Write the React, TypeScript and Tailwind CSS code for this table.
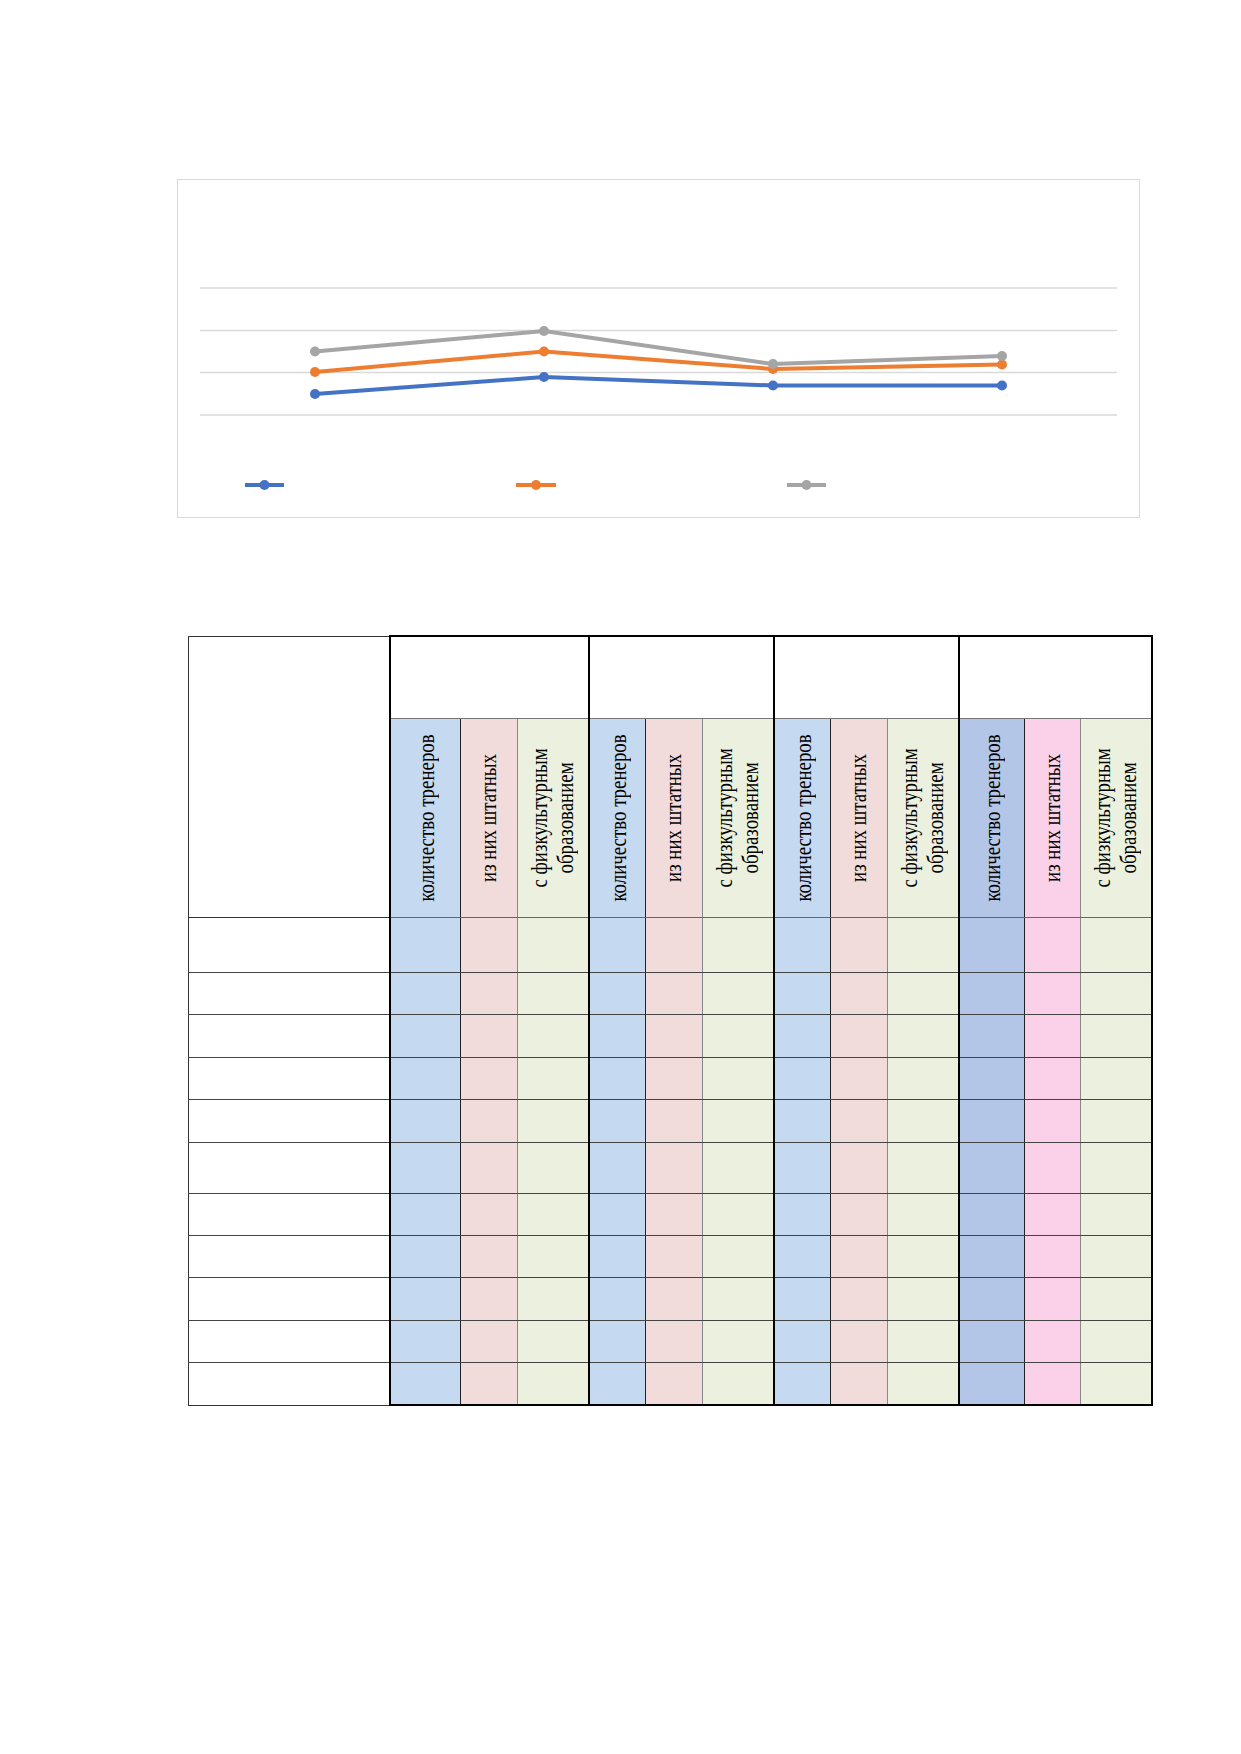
import React from 'react';

const serif = { fontFamily: '"Liberation Serif", "Times New Roman", serif' };

// chart series, already in svg pixel space (origin = inner top-left of the chart box)
const xs = [137, 366, 595, 824];
const series = [
  { color: '#4472c4', ys: [214, 197, 205.5, 205.5], legend: [67, 106] },
  { color: '#ed7d31', ys: [192, 171.5, 189, 184.5], legend: [338, 378] },
  { color: '#a5a5a5', ys: [171.5, 151, 184, 176], legend: [609, 648] },
];
const gridYs = [108, 150.5, 192.5, 235];

const Chart: React.FC = () => (
  <div className="ml-[177px] w-[963px] h-[339px] border border-[#d9d9d9] bg-white">
    <svg width="961" height="337" viewBox="0 0 961 337">
      {gridYs.map((y) => (
        <line key={y} x1="22" x2="939" y1={y} y2={y} stroke="#d9d9d9" strokeWidth="1.5" />
      ))}
      {series.map((s) => (
        <g key={s.color}>
          <polyline
            points={xs.map((x, i) => `${x},${s.ys[i]}`).join(' ')}
            fill="none"
            stroke={s.color}
            strokeWidth="4"
            strokeLinejoin="round"
            strokeLinecap="round"
          />
          {xs.map((x, i) => (
            <circle key={x} cx={x} cy={s.ys[i]} r="5" fill={s.color} />
          ))}
          <line x1={s.legend[0]} x2={s.legend[1]} y1="305" y2="305" stroke={s.color} strokeWidth="4" />
          <circle cx={(s.legend[0] + s.legend[1]) / 2} cy="305" r="5" fill={s.color} />
        </g>
      ))}
    </svg>
  </div>
);

type Group = { widths: number[]; blue: string; pink: string; green: string };

const groups: Group[] = [
  { widths: [71, 57, 71], blue: 'bg-[#c5d9f1]', pink: 'bg-[#f2dcdb]', green: 'bg-[#ebf1de]' },
  { widths: [57, 57, 71], blue: 'bg-[#c5d9f1]', pink: 'bg-[#f2dcdb]', green: 'bg-[#ebf1de]' },
  { widths: [57, 57, 71], blue: 'bg-[#c5d9f1]', pink: 'bg-[#f2dcdb]', green: 'bg-[#ebf1de]' },
  { widths: [66, 56, 71], blue: 'bg-[#b4c6e7]', pink: 'bg-[#fbd0e9]', green: 'bg-[#ebf1de]' },
];

const rowHeights = [55, 42, 43, 42, 43, 51, 42, 42, 43, 42, 43];

// header text runs bottom to top, slightly condensed like the scanned original
const VText: React.FC<{ children: React.ReactNode }> = ({ children }) => (
  <div className="flex h-[196px] items-center justify-center overflow-visible">
    <div className="shrink-0 [writing-mode:vertical-rl] rotate-180 scale-y-[0.82] text-center text-[23px] leading-[26px] text-black whitespace-nowrap">
      {children}
    </div>
  </div>
);

const DataTable: React.FC = () => (
  <table className="ml-[188px] mt-[117px] w-[963px] table-fixed border-collapse" style={serif}>
    <colgroup>
      <col className="w-[201px]" />
      {groups.map((g, gi) =>
        g.widths.map((w, i) => <col key={`${gi}-${i}`} style={{ width: w }} />)
      )}
    </colgroup>
    <thead>
      <tr className="h-[82px]">
        <th rowSpan={2} className="border border-[#333] bg-white" />
        {groups.map((_, gi) => (
          <th
            key={gi}
            colSpan={3}
            className="border-2 border-black border-b border-b-[#777] bg-white"
          />
        ))}
      </tr>
      <tr className="h-[199px]">
        {groups.map((g, gi) => (
          <React.Fragment key={gi}>
            <th className={`${g.blue} border-l-2 border-l-black border-r border-r-[#222] border-b border-b-[#666] p-0 pl-[3px] font-normal`}>
              <VText>количество тренеров</VText>
            </th>
            <th className={`${g.pink} border-r border-r-[#888] border-b border-b-[#666] p-0 font-normal`}>
              <VText>из них штатных</VText>
            </th>
            <th
              className={`${g.green} ${gi === 3 ? 'border-r-2 border-r-black' : ''} border-b border-b-[#666] p-0 font-normal`}
            >
              <VText>
                с физкультурным
                <br />
                образованием
              </VText>
            </th>
          </React.Fragment>
        ))}
      </tr>
    </thead>
    <tbody>
      {rowHeights.map((h, ri) => {
        const last = ri === rowHeights.length - 1;
        const bottom = last ? 'border-b-2 border-b-black' : 'border-b border-b-[#444]';
        return (
          <tr key={ri} style={{ height: h }}>
            <td className={`border-l border-l-[#333] border-b ${last ? 'border-b-[#333]' : 'border-b-[#444]'} bg-white`} />
            {groups.map((g, gi) => (
              <React.Fragment key={gi}>
                <td className={`${g.blue} border-l-2 border-l-black border-r border-r-[#222] ${bottom}`} />
                <td className={`${g.pink} border-r border-r-[#888] ${bottom}`} />
                <td className={`${g.green} ${gi === 3 ? 'border-r-2 border-r-black' : ''} ${bottom}`} />
              </React.Fragment>
            ))}
          </tr>
        );
      })}
    </tbody>
  </table>
);

export default function App() {
  return (
    <div className="w-[1241px] h-[1754px] bg-white pt-[179px]" style={serif}>
      <Chart />
      <DataTable />
    </div>
  );
}
